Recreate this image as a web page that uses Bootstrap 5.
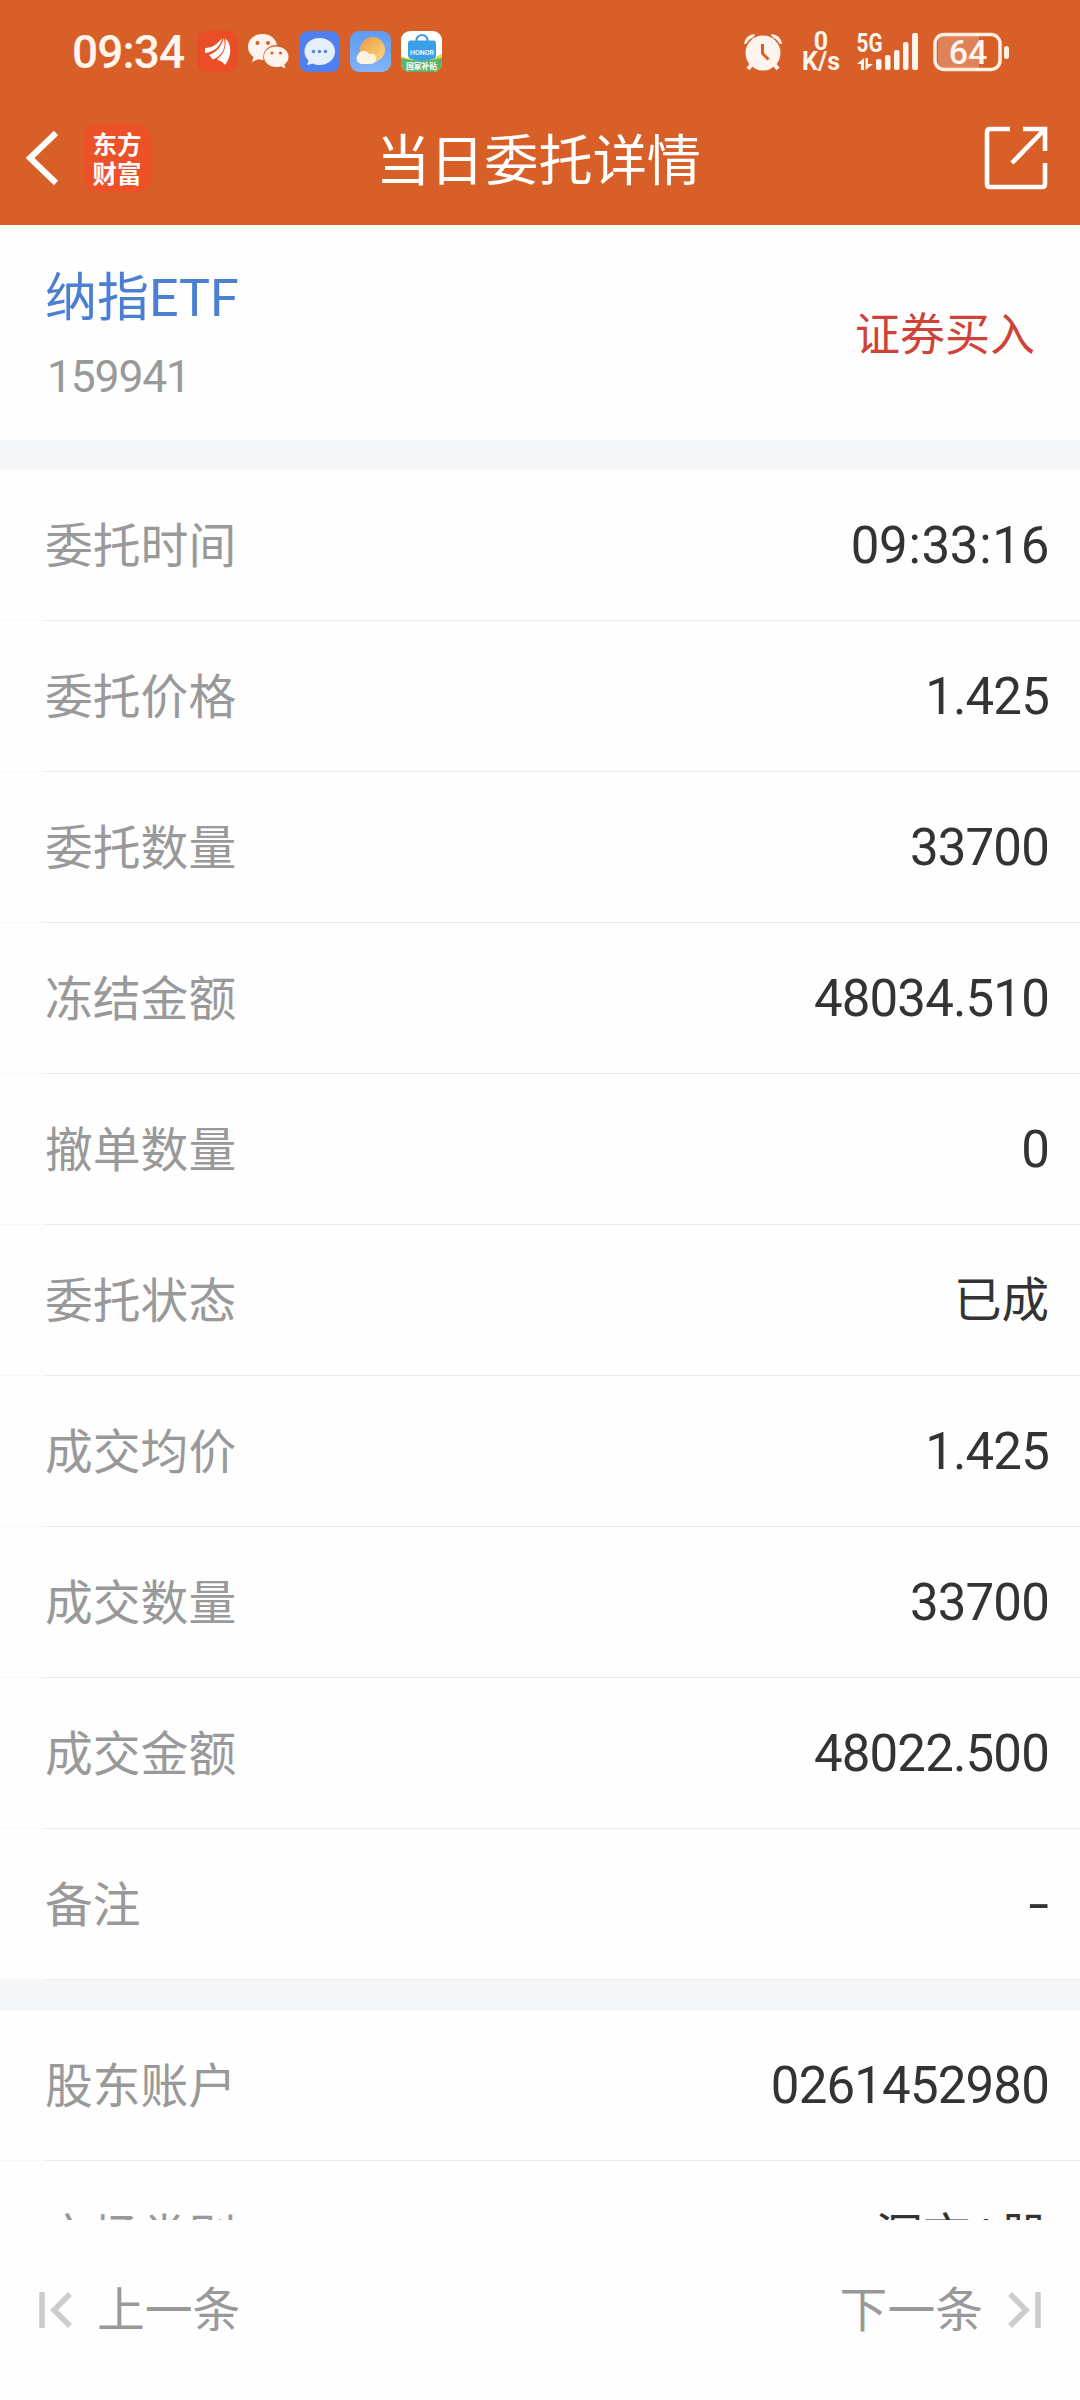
<!DOCTYPE html>
<html lang="zh-CN">
<head>
<meta charset="utf-8">
<meta name="viewport" content="width=device-width, initial-scale=1">
<title>当日委托详情</title>
<link href="https://cdn.jsdelivr.net/npm/bootstrap@5.3.0/dist/css/bootstrap.min.css" rel="stylesheet">
<style>
  body { font-family: Roboto, "Noto Sans CJK SC", sans-serif; background: #fefefe; color: #333; width: 1080px; height: 2400px; overflow: hidden; line-height: 1; }
  svg { display: block; flex: none; overflow: visible; }
  .top-area { background: #d85f28; height: 225px; color: #fff; }
  .status-bar { height: 90px; padding: 13px 71px 0 72px; color: #fff5ee; }
  .clock { font-size: 46px; font-weight: 500; width: 125px; letter-spacing: -.9px; }
  .status-icons { gap: 10px; }
  .net-speed { font-size: 25px; font-weight: 700; line-height: 20px; width: 42px; margin: 0 15px 0 18px; }
  .title-bar { height: 135px; padding: 0 32px 0 26px; }
  .title-side { width: 130px; gap: 24px; }
  .title-text { font-size: 54.2px; font-weight: 400; padding: 9px 0 0 3px; }
  .brand-tile { width: 68px; height: 68px; border-radius: 14px; background: #ec5128; font-family: "Noto Sans CJK SC", sans-serif; font-weight: 700; font-size: 24.5px; line-height: 29px; }
  .stock-head { height: 215px; padding: 5px 45px 0; }
  .stock-name { color: #4b7fd1; font-size: 52px; line-height: 60px; }
  .stock-code { color: #999; font-size: 44.5px; line-height: 50px; letter-spacing: -1.2px; margin: 23px 0 0 2px; }
  .side-tag { color: #cf4238; font-size: 45px; }
  .band { height: 30px; background: #f6f7f9; }
  .band.lined { height: 31px; background: linear-gradient(90deg, #f6f7f9 45px, #ececec 45px) top / 100% 1px no-repeat #f6f7f9; }
  .detail-row { height: 151px; padding: 0 31px 1px 45px; background: linear-gradient(90deg, #f7f7f7 45px, #ececec 45px) bottom / 100% 1px no-repeat; }
  .detail-row.last-row { height: 150px; padding-bottom: 0; background: none; }
  .detail-key { color: #999; font-size: 47.8px; padding-top: 5px; }
  .detail-val { color: #333; font-size: 51px; letter-spacing: -.85px; }
  .detail-val.time-val { letter-spacing: -.3px; }
  .detail-val.time-val i { font-style: normal; margin: 0 1px; }
  .detail-val.dash-val { transform: scaleX(1.45); transform-origin: right; padding-right: 1px; }
  .detail-val.cjk-val { font-size: 47.5px; letter-spacing: 0; padding-top: 3px; }
  .scroll-area { height: 1995px; overflow: hidden; }
  .pager { height: 180px; padding: 0 38px; color: #999; font-size: 47.8px; }
  .pager span { padding-top: 3px; }
</style>
<script src="https://cdn.jsdelivr.net/npm/bootstrap@5.3.0/dist/js/bootstrap.bundle.min.js"></script>
</head>
<body>
<header class="top-area">
  <div class="status-bar d-flex align-items-center justify-content-between">
    <div class="d-flex align-items-center">
      <span class="clock">09:34</span>
      <div class="status-icons d-flex align-items-center">
        <svg width="41" height="41" viewBox="0 0 41 41"><rect width="41" height="41" rx="9" fill="#ea4e26"/><g fill="#fff"><path d="M8 17C15 17 21 13 25 7C24 15 17 21 8 22Z"/><path d="M12 24C20 21 25 15 26.500 7C30 16 25 25 16 28.500Z"/><path d="M20 28.500C27 23 30 15 28 7C35 13 35 25 28 34Q25 30 20 28.500Z"/></g></svg>
        <svg width="41" height="41" viewBox="0 0 41 41"><path fill="#fff5ee" d="M14.500 3C6.500 3 0 8.500 0 16C0 20 2 23.500 5.500 26L4 31L10 28.200C12 28.700 13.500 29 15.500 29C14 20 20 14 29 14C28 7.500 22 3 14.500 3Z"/><path fill="#fff5ee" d="M28 15.500C21 15.500 16 20 16 25.800C16 31.500 21.500 36 28 36C30 36 31.500 35.800 33 35.200L37.500 37.500L36.300 33.500C39 31.500 40.500 29 40.500 26C40.500 20 35 15.500 28 15.500Z"/><g fill="#d85f28"><circle cx="9.500" cy="12" r="2"/><circle cx="20" cy="12" r="2"/><circle cx="24" cy="22" r="1.600"/><circle cx="32.500" cy="22" r="1.600"/></g></svg>
        <svg width="41" height="41" viewBox="0 0 41 41"><rect width="41" height="41" rx="9" fill="#4f80ee"/><path fill="#e6effe" d="M20.500 7C12 7 5.500 12.500 5.500 20.500C5.500 24 7 27 9.500 29.500L8 34L14 32.500C16 33.500 18 34 20.500 34C29 34 36 28.500 36 20.500C36 12.500 29 7 20.500 7Z"/><g fill="#4f80ee"><circle cx="14.500" cy="20.500" r="1.700"/><circle cx="20.500" cy="20.500" r="1.700"/><circle cx="26.500" cy="20.500" r="1.700"/></g></svg>
        <svg width="41" height="41" viewBox="0 0 41 41"><defs><linearGradient id="sky" x2="0" y2="1"><stop stop-color="#5c9bf0"/><stop offset="1" stop-color="#85b4f6"/></linearGradient><linearGradient id="sun" x1="0" x2="1" y2="1"><stop stop-color="#e89a45"/><stop offset="1" stop-color="#ffd780"/></linearGradient></defs><rect width="41" height="41" rx="9" fill="url(#sky)"/><circle cx="22.500" cy="18.500" r="12.500" fill="url(#sun)"/><path fill="#fff3df" d="M13 20A6 6 0 0 1 19 23C24 22 27 25 26 29C25 32 23 33 20 33H13C5 33 6 25 8 24C9 21 11 20 13 20Z"/></svg>
        <svg width="41" height="41" viewBox="0 0 41 41"><defs><clipPath id="store"><rect width="41" height="41" rx="9"/></clipPath></defs><g clip-path="url(#store)"><rect width="41" height="41" fill="#fff"/><path fill="#d5dd4a" d="M0 25Q20 34 41 23V41H0Z"/><path fill="#5fb26c" d="M0 27Q20 32 41 27V41H0Z"/><path d="M15.500 11V9A5.500 5 0 0 1 26.500 9V11" fill="none" stroke="#3d9be0" stroke-width="2.200"/><path fill="#3b9fe8" d="M9.500 9.500H32.500Q35 9.500 35 12.500V24Q35 27 32 28Q21 32 10 28Q7 27 7 24V12.500Q7 9.500 9.500 9.500Z"/><text x="21" y="24" text-anchor="middle" font-size="7" font-weight="500" fill="#fff" textLength="24">HONOR</text><text x="20.500" y="38" text-anchor="middle" font-size="7.800" font-weight="700" fill="#fff">国家补贴</text></g></svg>
      </div>
    </div>
    <div class="d-flex align-items-center">
      <svg width="38" height="38" viewBox="0 0 38 38"><g fill="#fff5ee"><circle cx="19" cy="20" r="17.500"/><path d="M0 11A11 11 0 0 1 11 1L10 3.500A20 20 0 0 0 2 11Z"/><path d="M38 11A11 11 0 0 0 27 1L28 3.500A20 20 0 0 1 36 11Z"/></g><path d="M8 31L4 36M30 31L34 36" stroke="#fff5ee" stroke-width="4"/><path d="M18.500 11V20.500L24.500 26.500" fill="none" stroke="#d85f28" stroke-width="3"/></svg>
      <div class="net-speed text-center">0<br>K/s</div>
      <svg width="62" height="40" viewBox="0 0 62 40"><g fill="#fff5ee"><text x="-.5" y="19.500" font-size="25" font-weight="700" textLength="26" lengthAdjust="spacingAndGlyphs">5G</text><rect x="19" y="27" width="5.500" height="11" rx="2"/><rect x="28" y="23" width="5.500" height="15" rx="2"/><rect x="37" y="18" width="5.500" height="20" rx="2"/><rect x="46" y="10" width="5.500" height="28" rx="2"/><rect x="55" y="1" width="6" height="37" rx="2"/><path d="M0 32L7 26V38H4V32ZM8.500 26H11V32H16L8.500 38Z"/></g></svg>
      <svg class="ms-3" width="74" height="38" viewBox="0 0 74 38"><path d="M9 3H44V35H9Q3 35 3 29V9Q3 3 9 3Z" fill="#fff" opacity=".22"/><rect x="0" y="1.500" width="65" height="35" rx="9" fill="none" stroke="#fff0e6" stroke-width="3.500"/><rect x="69" y="13" width="5" height="13" rx="2.500" fill="#fff0e6"/><text x="33" y="31" text-anchor="middle" font-size="34" font-weight="500" fill="#fff5ee">64</text></svg>
    </div>
  </div>
  <nav class="title-bar d-flex align-items-center justify-content-between">
    <div class="title-side d-flex align-items-center">
      <svg width="33" height="54" viewBox="0 0 33 54"><path d="M30 2L4 27L30 52" fill="none" stroke="#fff" stroke-width="6"/></svg>
      <div class="brand-tile d-flex flex-column align-items-center justify-content-center"><span>东方</span><span>财富</span></div>
    </div>
    <h1 class="title-text mb-0">当日委托详情</h1>
    <div class="title-side d-flex justify-content-end">
      <svg width="64" height="64" viewBox="0 0 64 64"><path d="M26 3H6Q3 3 3 6V58Q3 61 6 61H58Q61 61 61 58V37M39 3H61V25M60 4L28 37" fill="none" stroke="#fff" stroke-width="4.600"/></svg>
    </div>
  </nav>
</header>
<main class="scroll-area">
  <section class="stock-head d-flex align-items-center justify-content-between">
    <div><div class="stock-name">纳指ETF</div><div class="stock-code">159941</div></div>
    <div class="side-tag">证券买入</div>
  </section>
  <div class="band"></div>
  <section>
    <div class="detail-row d-flex align-items-center justify-content-between"><span class="detail-key">委托时间</span><span class="detail-val time-val">09<i>:</i>33<i>:</i>16</span></div>
    <div class="detail-row d-flex align-items-center justify-content-between"><span class="detail-key">委托价格</span><span class="detail-val">1.425</span></div>
    <div class="detail-row d-flex align-items-center justify-content-between"><span class="detail-key">委托数量</span><span class="detail-val">33700</span></div>
    <div class="detail-row d-flex align-items-center justify-content-between"><span class="detail-key">冻结金额</span><span class="detail-val">48034.510</span></div>
    <div class="detail-row d-flex align-items-center justify-content-between"><span class="detail-key">撤单数量</span><span class="detail-val">0</span></div>
    <div class="detail-row d-flex align-items-center justify-content-between"><span class="detail-key">委托状态</span><span class="detail-val cjk-val">已成</span></div>
    <div class="detail-row d-flex align-items-center justify-content-between"><span class="detail-key">成交均价</span><span class="detail-val">1.425</span></div>
    <div class="detail-row d-flex align-items-center justify-content-between"><span class="detail-key">成交数量</span><span class="detail-val">33700</span></div>
    <div class="detail-row d-flex align-items-center justify-content-between"><span class="detail-key">成交金额</span><span class="detail-val">48022.500</span></div>
    <div class="detail-row last-row d-flex align-items-center justify-content-between"><span class="detail-key">备注</span><span class="detail-val dash-val">-</span></div>
  </section>
  <div class="band lined"></div>
  <section>
    <div class="detail-row d-flex align-items-center justify-content-between"><span class="detail-key">股东账户</span><span class="detail-val">0261452980</span></div>
    <div class="detail-row d-flex align-items-center justify-content-between"><span class="detail-key">市场类别</span><span class="detail-val cjk-val">深市A股</span></div>
  </section>
</main>
<footer class="pager d-flex align-items-center justify-content-between">
  <div class="d-flex align-items-center gap-4"><svg width="35" height="36" viewBox="0 0 35 36"><path d="M4 0V36M32 2L16 18L32 34" fill="none" stroke="#ccc" stroke-width="5.500"/></svg><span>上一条</span></div>
  <div class="d-flex align-items-center gap-4"><span>下一条</span><svg width="35" height="36" viewBox="0 0 35 36"><path d="M31 0V36M3 2L19 18L3 34" fill="none" stroke="#ccc" stroke-width="5.500"/></svg></div>
</footer>
</body>
</html>
